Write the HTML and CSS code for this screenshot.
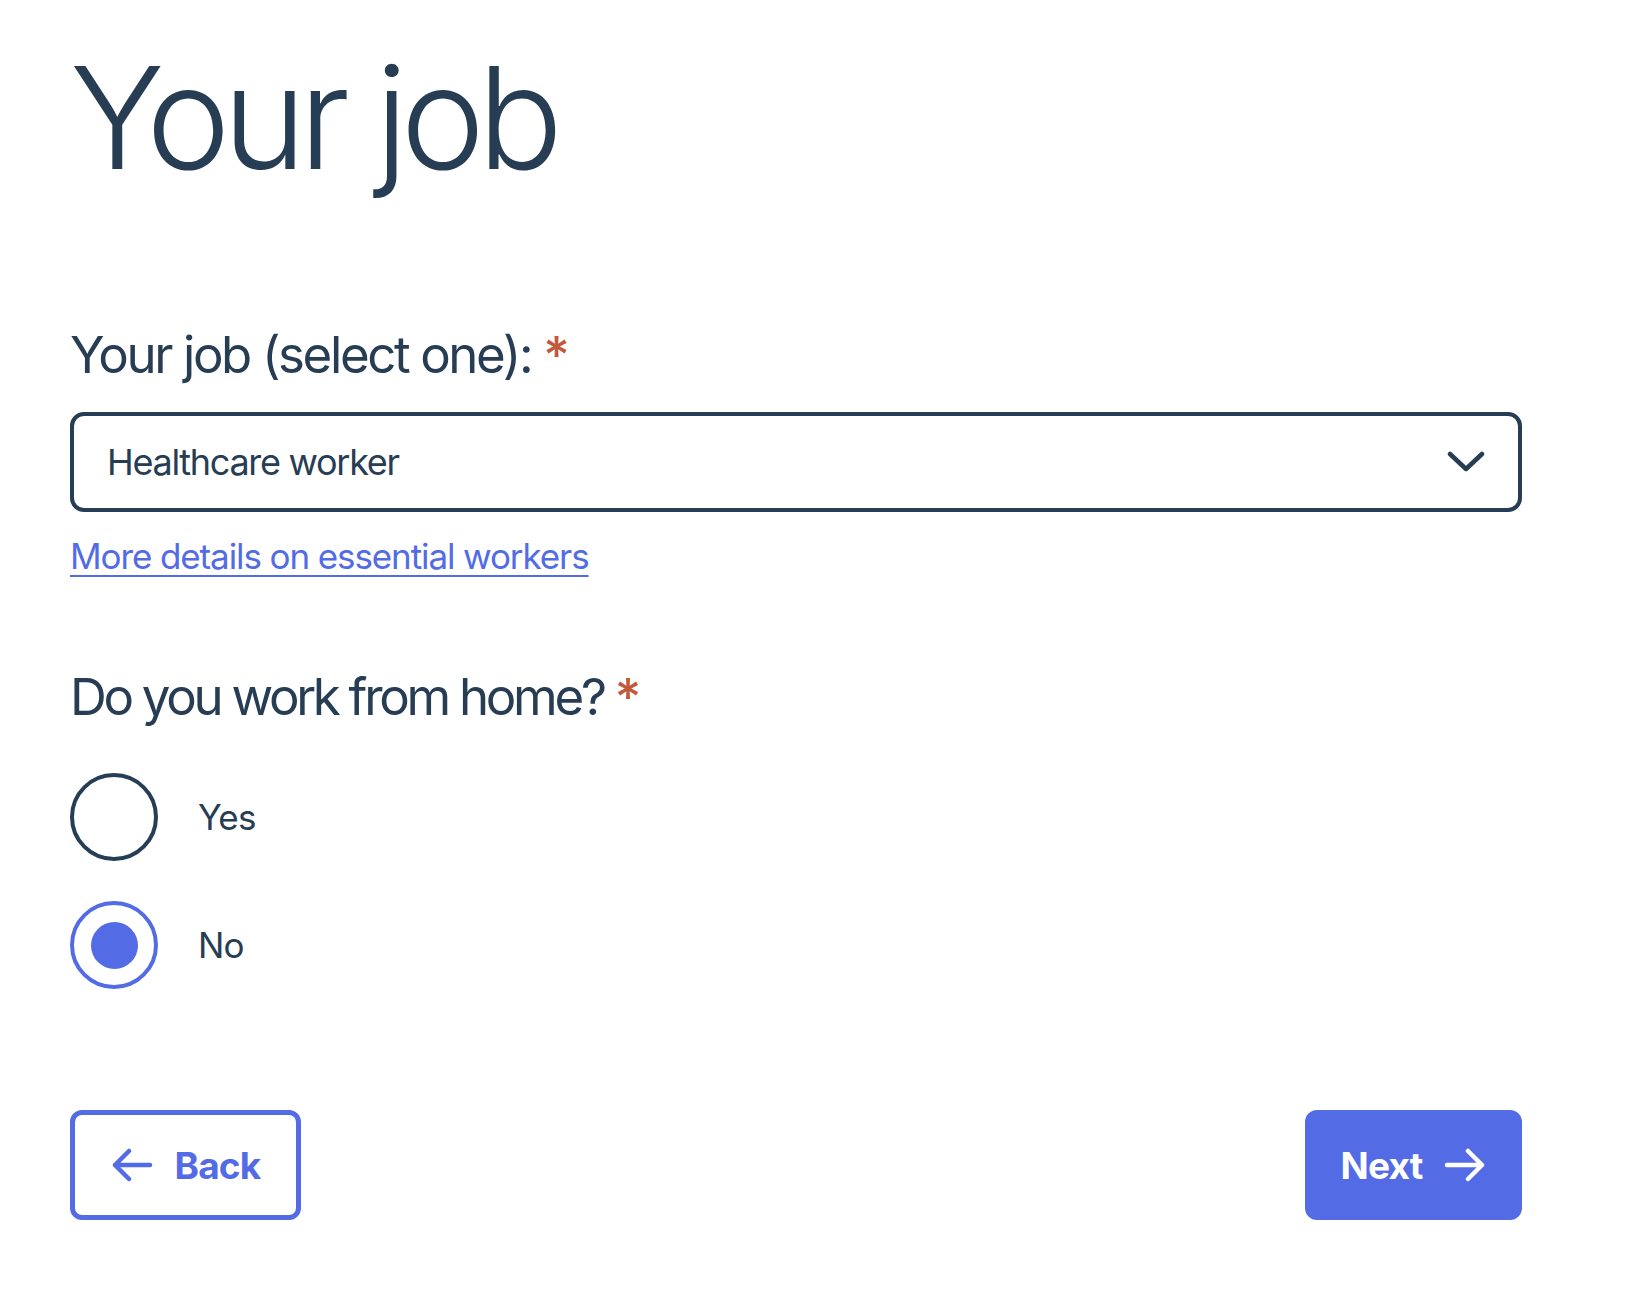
FILE: index.html
```html
<!DOCTYPE html>
<html lang="en">
<head>
<meta charset="utf-8">
<title>Your job</title>
<link rel="stylesheet" href="styles.css">
</head>
<body>
<main class="page">
  <h1 class="title">Your job</h1>

  <div class="field">
    <label class="label" for="job">Your job (select one): <span class="req">*</span></label>
    <div class="select" id="job">
      <span class="select-value">Healthcare worker</span>
      <svg class="chevron" width="38" height="22" viewBox="0 0 38 22" aria-hidden="true">
        <path d="M3 3 L19 18 L35 3" fill="none" stroke="#253d55" stroke-width="4.5" stroke-linecap="round" stroke-linejoin="round"/>
      </svg>
    </div>
    <a class="link" href="#">More details on essential workers</a>
  </div>

  <fieldset class="group">
    <legend class="label label-2">Do you work from home? <span class="req">*</span></legend>
    <div class="options">
      <label class="option">
        <span class="radio"></span>
        <span class="option-text">Yes</span>
      </label>
      <label class="option">
        <span class="radio radio-on"><span class="dot"></span></span>
        <span class="option-text">No</span>
      </label>
    </div>
  </fieldset>

  <div class="actions">
    <button class="btn btn-back" type="button">
      <svg width="42" height="34" viewBox="0 0 42 34" aria-hidden="true">
        <path d="M39 17 H4 M18 3 L4 17 L18 31" fill="none" stroke="#536ce6" stroke-width="4.5" stroke-linecap="round" stroke-linejoin="round"/>
      </svg>
      <span>Back</span>
    </button>
    <button class="btn btn-next" type="button">
      <span>Next</span>
      <svg width="42" height="34" viewBox="0 0 42 34" aria-hidden="true">
        <path d="M3 17 H38 M24 3 L38 17 L24 31" fill="none" stroke="#ffffff" stroke-width="4.5" stroke-linecap="round" stroke-linejoin="round"/>
      </svg>
    </button>
  </div>
</main>
</body>
</html>
```

FILE: styles.css
```css
* { box-sizing: border-box; }

html, body {
  margin: 0;
  background: #ffffff;
}

body {
  font-family: Inter, "Noto Sans", sans-serif;
  color: #263d54;
}

.page {
  width: 1452px;
  margin-left: 70px;
  padding-top: 46px;
  display: flex;
  flex-direction: column;
}

.title {
  margin: 0;
  font-size: 142px;
  line-height: 1;
  font-weight: 300;
  letter-spacing: -7.5px;
}

.field {
  display: flex;
  flex-direction: column;
  margin-top: 141px;
}

.label {
  display: block;
  font-size: 51px;
  line-height: 1;
  font-weight: 400;
  letter-spacing: -2.4px;
}

.label-2 {
  letter-spacing: -3.3px;
}

.req {
  color: #c3583a;
  font-weight: 500;
  letter-spacing: 0;
}

.select {
  margin-top: 32px;
  height: 100px;
  border: 4px solid #253d55;
  border-radius: 14px;
  display: flex;
  align-items: center;
  justify-content: space-between;
  padding: 0 33px 0 33px;
}

.select-value {
  font-size: 36px;
  line-height: 1;
  letter-spacing: -1.3px;
}

.chevron { display: block; }

.link {
  margin-top: 27px;
  align-self: flex-start;
  font-size: 35px;
  line-height: 1;
  color: #536ce6;
  text-decoration: underline;
  text-underline-offset: 6px;
  text-decoration-thickness: 2px;
  letter-spacing: -1.1px;
}

.group {
  border: 0;
  margin: 97px 0 0 0;
  padding: 0;
  min-width: 0;
}

.label-2 {
  padding: 0;
  margin-bottom: 51px;
}

.options {
  display: flex;
  flex-direction: column;
  gap: 40px;
}

.option {
  display: flex;
  align-items: center;
  gap: 40px;
}

.radio {
  width: 88px;
  height: 88px;
  border-radius: 50%;
  border: 4px solid #253d55;
  display: flex;
  align-items: center;
  justify-content: center;
  flex: none;
}

.radio-on {
  border-color: #536ce6;
}

.dot {
  width: 47px;
  height: 47px;
  border-radius: 50%;
  background: #536ce6;
}

.option-text {
  font-size: 35px;
  line-height: 1;
  letter-spacing: -0.8px;
}

.actions {
  margin-top: 121px;
  display: flex;
  justify-content: space-between;
}

.btn {
  height: 110px;
  border-radius: 12px;
  font-family: Inter, "Noto Sans", sans-serif;
  font-size: 37px;
  font-weight: 700;
  letter-spacing: -0.8px;
  display: flex;
  align-items: center;
  justify-content: center;
  gap: 22px;
  cursor: pointer;
}

.btn svg { display: block; }

.btn-back {
  width: 231px;
  background: #ffffff;
  border: 5px solid #536ce6;
  color: #536ce6;
}

.btn-next {
  width: 217px;
  background: #536ce6;
  border: 0;
  color: #ffffff;
}
```
